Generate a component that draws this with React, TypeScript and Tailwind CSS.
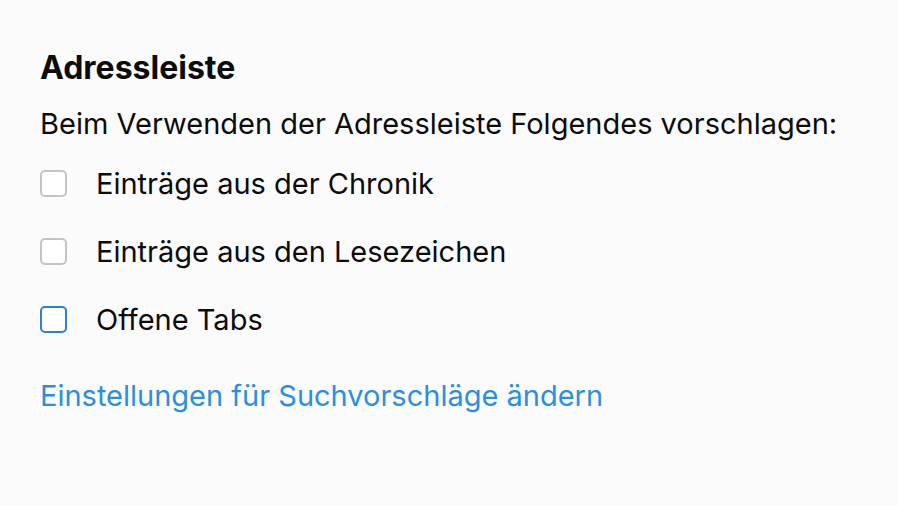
import React from "react";

function Box({ active }: { active?: boolean }) {
  return (
    <span
      className={
        "block w-[27px] h-[27px] shrink-0 rounded-[5px] border-2 bg-white " +
        (active ? "border-[#2a80d2]" : "border-[#c4c4c4]")
      }
    />
  );
}

export default function App() {
  return (
    <div className="w-[898px] h-[506px] bg-[#fbfbfb] text-[#0c0c0d] font-['Inter',sans-serif] pl-[40px] pt-[48px]">
      <h1 className="text-[32px] font-bold leading-[40px]">Adressleiste</h1>
      <p className="text-[29px] leading-[36px] mt-[18px]">Beim Verwenden der Adressleiste Folgendes vorschlagen:</p>
      <div className="flex flex-col gap-[41px] mt-[28px]">
        <label className="flex items-center gap-[29px] text-[29px] leading-[27px]">
          <Box />
          <span>Einträge aus der Chronik</span>
        </label>
        <label className="flex items-center gap-[29px] text-[29px] leading-[27px]">
          <Box />
          <span>Einträge aus den Lesezeichen</span>
        </label>
        <label className="flex items-center gap-[29px] text-[29px] leading-[27px]">
          <Box active />
          <span>Offene Tabs</span>
        </label>
      </div>
      <a className="block mt-[45px] text-[29px] leading-[36px] text-[#2b8fe0]">Einstellungen für Suchvorschläge ändern</a>
    </div>
  );
}
